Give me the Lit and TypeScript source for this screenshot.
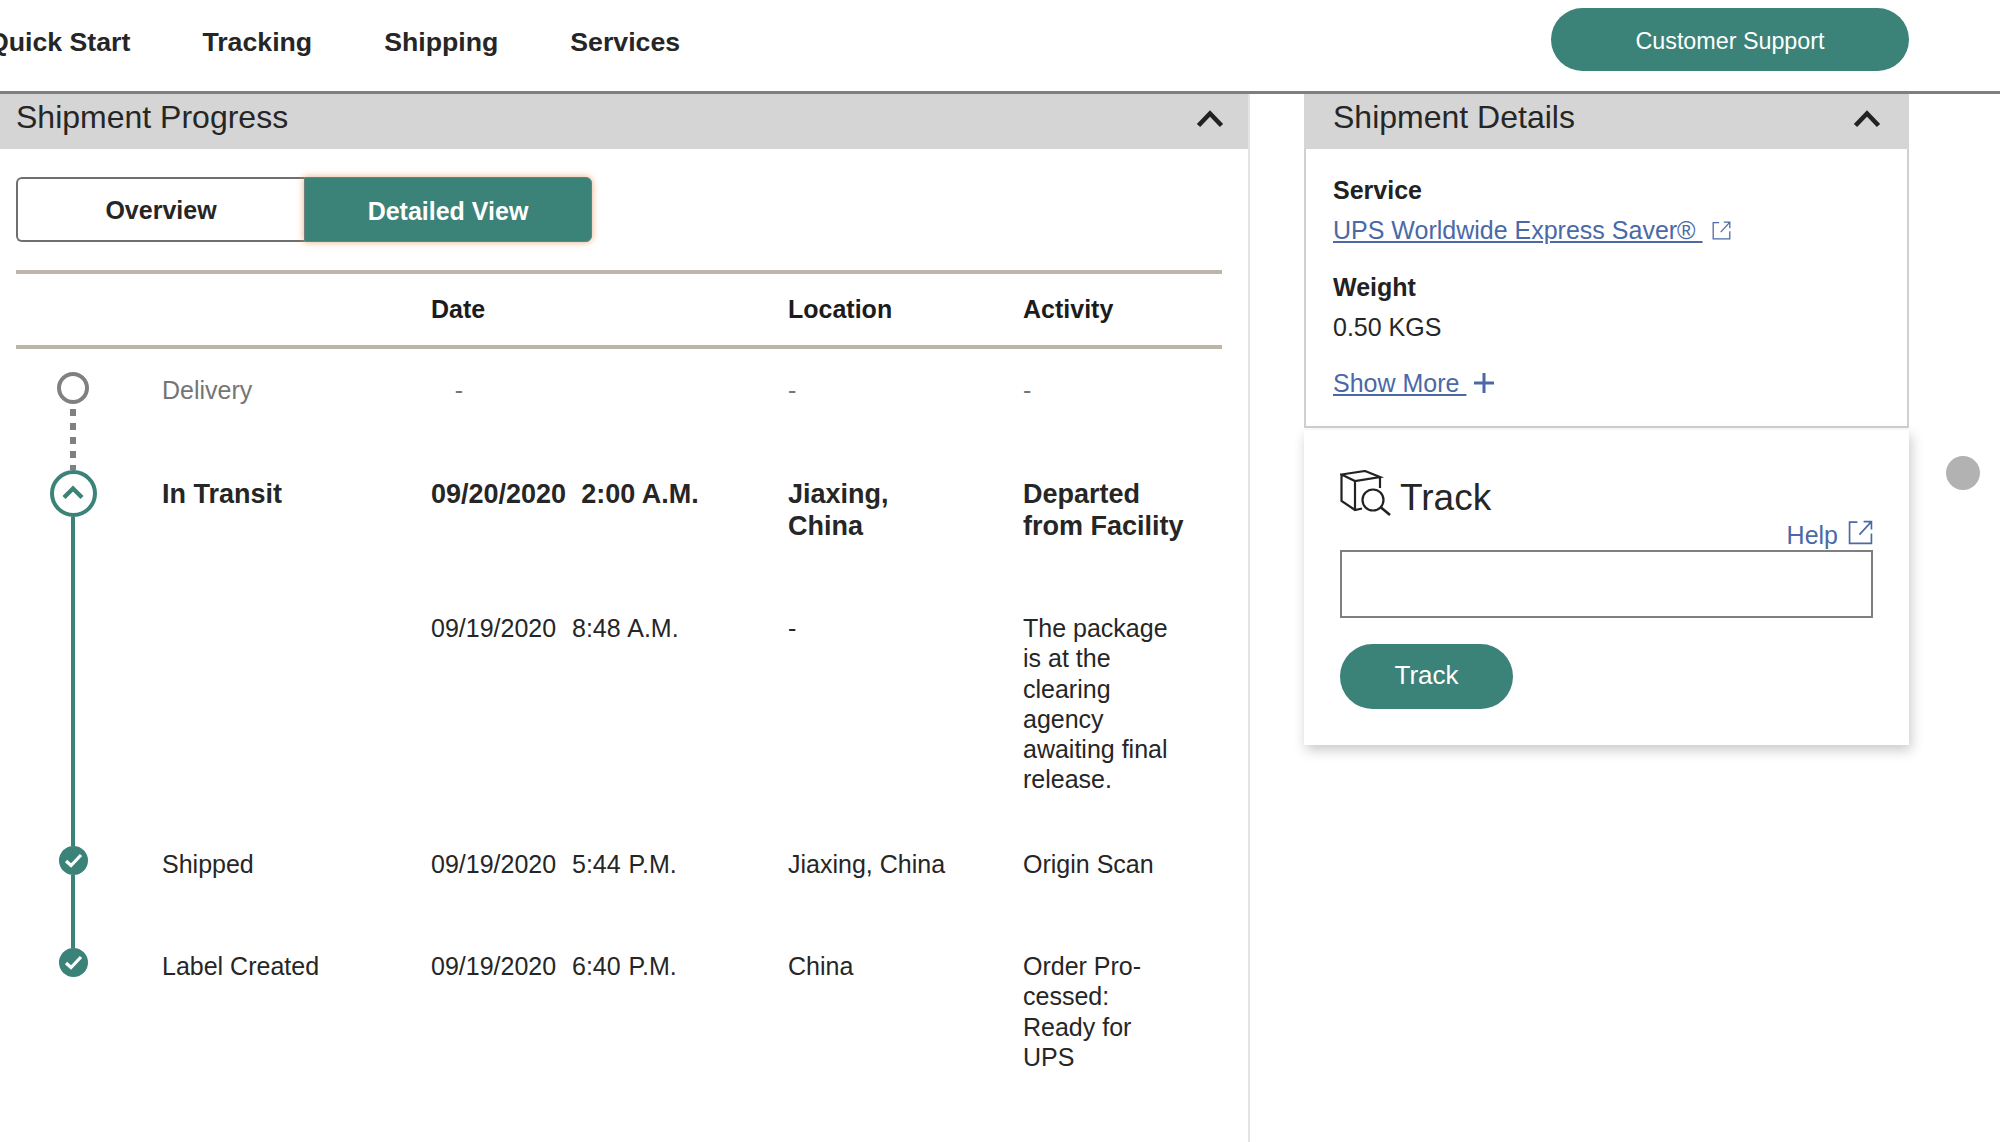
import { LitElement, html, css, svg } from "lit";
import { customElement } from "lit/decorators.js";

const extIcon = (size: number) => html`<svg class="ext" width=${size} height=${size} viewBox="0 0 24 24" fill="none" stroke="currentColor" stroke-width="1.6">
  <path d="M9 2H1.5V22.5H22.5V13"/><path d="M11 14L22 2M15 1.5H22.5V9" /></svg>`;

const chevronUp = html`<svg class="chev" width="28" height="18" viewBox="0 0 28 18" fill="none" stroke="#222" stroke-width="4.6"><path d="M2.5 15.5L14 3.5L25.5 15.5"/></svg>`;

const check = html`<span class="dot"><svg width="19" height="15" viewBox="0 0 19 15" fill="none" stroke="#fff" stroke-width="3.2"><path d="M2 8L7 12.5L17 2"/></svg></span>`;

type Row = { cls: string; marker: unknown; line: string; status: string; date: string; loc: unknown; act: unknown };

const rows: Row[] = [
  { cls: "r1 muted", marker: html`<span class="ring"></span>`, line: "dash", status: "Delivery", date: "\u00a0\u00a0\u00a0-", loc: "-", act: "-" },
  { cls: "r2 strong", marker: html`<span class="cur"><svg width="24" height="15" viewBox="0 0 24 15" fill="none" stroke="#3b8278" stroke-width="4.4"><path d="M3 12.5L12 3.5L21 12.5"/></svg></span>`, line: "solid", status: "In Transit", date: "09/20/2020\u00a0\u00a02:00 A.M.", loc: html`Jiaxing,<br />China`, act: "Departed from Facility" },
  { cls: "r3", marker: "", line: "solid", status: "", date: "09/19/2020\u00a0\u00a08:48 A.M.", loc: "-", act: "The package is at the clearing agency awaiting final release." },
  { cls: "r4", marker: check, line: "solid", status: "Shipped", date: "09/19/2020\u00a0\u00a05:44 P.M.", loc: "Jiaxing, China", act: "Origin Scan" },
  { cls: "r5", marker: check, line: "", status: "Label Created", date: "09/19/2020\u00a0\u00a06:40 P.M.", loc: "China", act: html`Order Pro-<br />cessed:<br />Ready for<br />UPS` },
];

@customElement("app-root")
export class AppRoot extends LitElement {
  static styles = css`
    :host { display: block; width: 2000px; height: 1142px; overflow: hidden; background: #fff; color: #262626;
      font-family: "Liberation Sans", Arial, sans-serif; font-size: 25px; line-height: 30.3px; }
    a { color: #4a69a6; }
    .top { height: 91px; border-bottom: 3px solid #7f7f7f; display: flex; justify-content: space-between; padding-right: 91px; }
    .nav { display: flex; gap: 72px; margin-left: -12px; padding-top: 27px; font-weight: 700; font-size: 26.7px; }
    .support { margin-top: 8px; width: 358px; height: 63px; border-radius: 32px; background: #3b8278; color: #fff; display: flex; align-items: center; justify-content: center; font-size: 23.3px; padding-top: 4px; box-sizing: border-box; }
    .main { display: flex; height: 1048px; }
    .left { width: 1250px; border-right: 2px solid #e4e4e4; box-sizing: border-box; }
    .phead { height: 55px; background: #d5d5d5; display: flex; justify-content: space-between; align-items: flex-start; font-size: 32px; line-height: 36px; padding: 5px 24px 0 16px; box-sizing: border-box; }
    .chev { margin-top: 11px; flex: none; }
    .body { padding: 28px 26px 0 16px; }
    .toggle { display: flex; width: 576px; height: 65px; font-weight: 700; }
    .toggle span { display: flex; align-items: center; justify-content: center; box-sizing: border-box; }
    .ov { width: 288px; border: 2px solid #6f6f6f; border-right: 0; border-radius: 6px 0 0 6px; padding-top: 2px; }
    .dv { width: 288px; background: #3b8278; color: #fff; border-radius: 0 6px 6px 0; border: 1px solid #6d7f78; padding-top: 3px; box-shadow: 0 0 7px rgba(222, 146, 84, 0.75); }
    .thead { margin-top: 28px; margin-bottom: 23px; height: 71px; border-top: 4px solid #bdb5a7; border-bottom: 4px solid #bdb5a7; font-weight: 700; color: #1c1c1c; align-items: center; box-sizing: content-box; }
    .grid { display: grid; grid-template-columns: 146px 269px 357px 235px 1fr; }
    .mark { display: flex; flex-direction: column; align-items: center; width: 114px; }
    .dot { width: 29px; height: 29px; border-radius: 50%; background: #3b8278; display: flex; align-items: center; justify-content: center; flex: none; }
    .ring { width: 32px; height: 32px; border: 4px solid #808080; border-radius: 50%; box-sizing: border-box; flex: none; }
    .cur { width: 47px; height: 47px; border: 4px solid #3b8278; border-radius: 50%; box-sizing: border-box; display: flex; align-items: center; justify-content: center; flex: none; padding-bottom: 2px; }
    .line { flex: 1; width: 4px; }
    .line.solid { background: #3b8278; }
    .line.dash { width: 6px; margin-top: 5px; background: repeating-linear-gradient(to bottom, #808080 0 7px, transparent 7px 14px); }
    .r1 { height: 98px; } .r2 { height: 130px; } .r3 { height: 246px; } .r4 { height: 102px; } .r5 { height: 150px; }
    .cell { padding-top: var(--pt); }
    .date { word-spacing: 1px; }
    .r1 { --pt: 3px; } .r2 { --pt: 8px; } .r3 { --pt: 13px; } .r4 { --pt: 3px; } .r5 { --pt: 3px; }
    .muted .cell { color: #757575; }
    .strong .cell { font-weight: 700; font-size: 27px; line-height: 32px; }
    .strong .date { word-spacing: 0; }
    .act { padding-right: 33px; }
    .right { margin-left: 54px; width: 605px; }
    .details { border: 2px solid #d0d0d0; border-top: 0; height: 279px; padding: 26px 27px 0; box-sizing: border-box; }
    .phead.d { padding: 5px 28px 0 29px; }
    .details .k { font-weight: 700; color: #222; }
    .details .v { margin-top: 10px; display: flex; align-items: center; }
    .details .block { margin-bottom: 26px; }
    .details .ext { margin-left: 10px; color: #4a69a6; }
    .plus { margin-left: 8px; }
    .more { display: flex; align-items: center; }
    .track { height: 315px; margin-top: 2px; padding: 0 36px; box-sizing: border-box; box-shadow: 2px 5px 12px rgba(0,0,0,0.22); display: flex; flex-direction: column; }
    .ttitle { display: flex; padding-top: 40px; align-items: flex-start; font-size: 37px; line-height: 44px; height: 90px; box-sizing: border-box; }
    .ttitle span { margin-left: 9px; margin-top: 6px; }
    .help { display: flex; justify-content: flex-end; align-items: center; height: 30px; color: #4a69a6; }
    .help .ext { margin-left: 10px; margin-bottom: 6px; }
    input { display: block; width: 100%; height: 68px; box-sizing: border-box; border: 2px solid #7f7f7f; background: #fff; margin: 0; padding: 0; border-radius: 0; outline: none; }
    .tbtn { margin-top: 26px; width: 173px; height: 65px; border-radius: 33px; background: #3b8278; color: #fff; display: flex; align-items: center; justify-content: center; font-size: 26px; padding-bottom: 2px; box-sizing: border-box; }
    .scroll { width: 34px; height: 34px; border-radius: 50%; background: #b2b2b2; margin: 362px 0 0 37px; flex: none; }
  `;

  render() {
    return html`
      <div class="top">
        <div class="nav"><span>Quick Start</span><span>Tracking</span><span>Shipping</span><span>Services</span></div>
        <div class="support">Customer Support</div>
      </div>
      <div class="main">
        <section class="left">
          <div class="phead"><span>Shipment Progress</span>${chevronUp}</div>
          <div class="body">
            <div class="toggle"><span class="ov">Overview</span><span class="dv">Detailed View</span></div>
            <div class="grid thead"><div></div><div></div><div>Date</div><div>Location</div><div>Activity</div></div>
            ${rows.map((r) => html`
              <div class="grid ${r.cls}">
                <div class="mark">${r.marker}<div class="line ${r.line}"></div></div>
                <div class="cell">${r.status}</div>
                <div class="cell date">${r.date}</div>
                <div class="cell">${r.loc}</div>
                <div class="cell act">${r.act}</div>
              </div>`)}
          </div>
        </section>
        <aside class="right">
          <div class="phead d"><span>Shipment Details</span>${chevronUp}</div>
          <div class="details">
            <div class="block">
              <div class="k">Service</div>
              <div class="v"><a href="#">UPS Worldwide Express Saver®&nbsp;</a>${extIcon(19)}</div>
            </div>
            <div class="block">
              <div class="k">Weight</div>
              <div class="v">0.50 KGS</div>
            </div>
            <div class="more"><a href="#">Show More&nbsp;</a>
              <svg class="plus" width="20" height="20" viewBox="0 0 20 20" stroke="#4a69a6" stroke-width="3"><path d="M10 0V20M0 10H20"/></svg></div>
          </div>
          <div class="track">
            <div class="ttitle">
              <svg width="51" height="46" viewBox="0 0 51 46" fill="none" stroke="#222" stroke-width="2.2">
                ${svg`<path d="M1.5 4.5L25 1L40 7L15 11ZM1.5 4.5V31L15 40L22 38.5M15 11V40M40 7V18"/><circle cx="33" cy="30" r="10.5"/><path d="M41 37.5L50 45" stroke-width="2.6"/>`}
              </svg>
              <span>Track</span>
            </div>
            <div class="help">Help${extIcon(25)}</div>
            <input aria-label="Track" />
            <div class="tbtn">Track</div>
          </div>
        </aside>
        <div class="scroll"></div>
      </div>
    `;
  }
}
